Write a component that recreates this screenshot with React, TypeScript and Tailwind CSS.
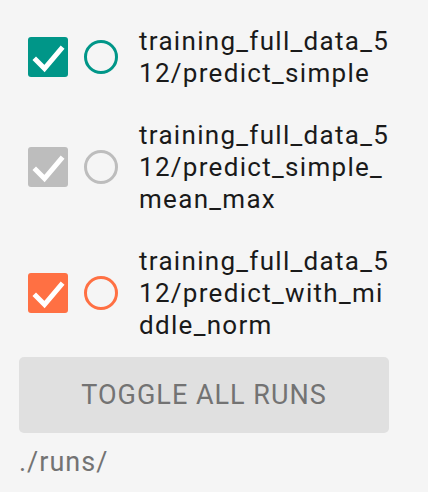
import React from "react";

// One entry per run in the selector
interface Run {
  name: string;
  color: string;
}

const runs: Run[] = [
  { name: "training_full_data_512/predict_simple", color: "#009688" },
  { name: "training_full_data_512/predict_simple_mean_max", color: "#bdbdbd" },
  { name: "training_full_data_512/predict_with_middle_norm", color: "#ff7043" },
];

const RunRow: React.FC<{ run: Run }> = ({ run }) => {
  return (
    <div className="flex items-center py-[15px] pl-[9px]">
      <div className="flex items-center shrink-0">
        <div
          className="w-[40px] h-[40px] rounded-[3px] flex items-center justify-center"
          style={{ backgroundColor: run.color }}
        >
          <svg width="40" height="40" viewBox="0 0 40 40">
            <polyline
              points="8,23 16.5,31.5 33,12"
              fill="none"
              stroke="white"
              strokeWidth="5"
              strokeLinecap="square"
            />
          </svg>
        </div>
        <div
          className="ml-[16px] w-[34px] h-[34px] rounded-full border-[3.3px]"
          style={{ borderColor: run.color }}
        />
      </div>
      <div className="ml-[21px] w-[255px] text-[26px] leading-[32px] tracking-[1.3px] text-[#1a1a1a] break-all">
        {run.name}
      </div>
    </div>
  );
};

export default function App() {
  return (
    <div
      className="w-[428px] h-[492px] bg-[#f5f5f5] px-[19px] pt-[10px]"
      style={{ fontFamily: "Roboto, 'Liberation Sans', sans-serif" }}
    >
      {runs.map((run) => (
        <RunRow key={run.name} run={run} />
      ))}
      <button className="mt-[1px] w-[370px] h-[76px] rounded-[5px] bg-[#e0e0e0] text-[27px] tracking-[1px] text-[#737373] uppercase">
        Toggle all runs
      </button>
      <div className="mt-[14px] text-[27px] leading-[31px] tracking-[1px] text-[#737373]">./runs/</div>
    </div>
  );
}
